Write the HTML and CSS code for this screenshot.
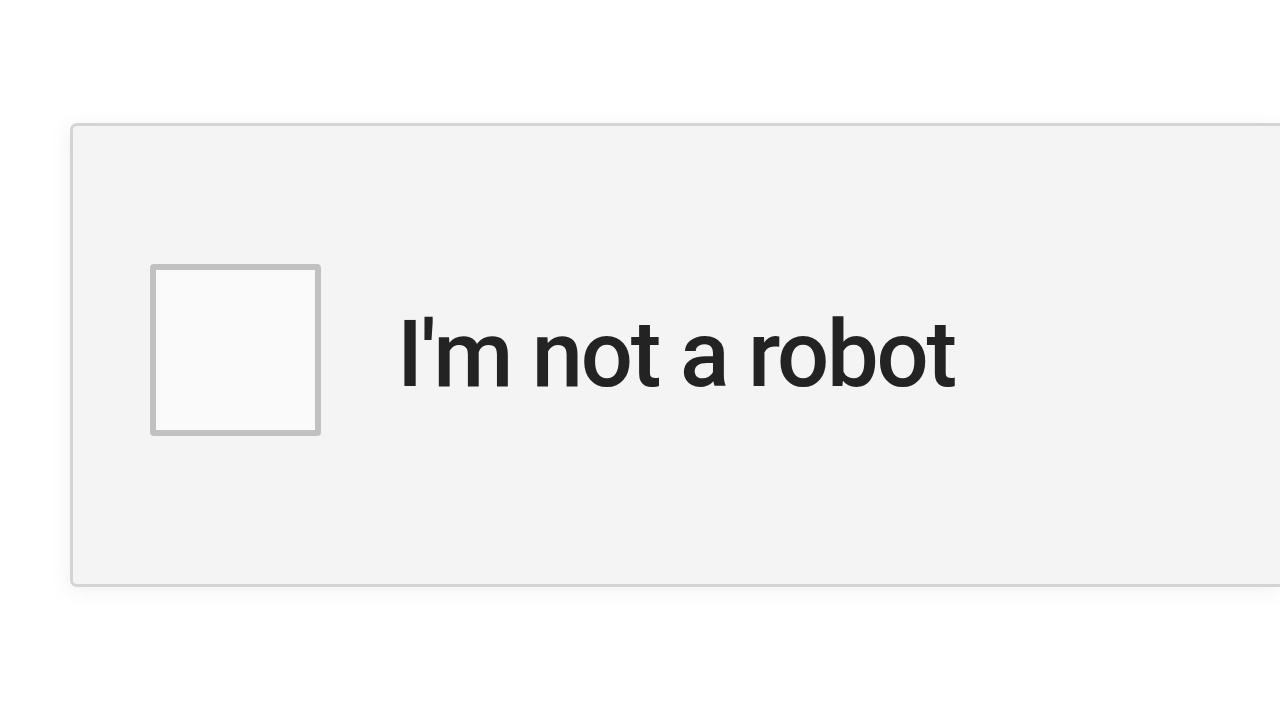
FILE: index.html
```html
<!DOCTYPE html>
<html lang="en">
<head>
    <meta charset="UTF-8">
    <meta name="viewport" content="width=device-width, initial-scale=1.0">
    <title>reCAPTCHA</title>
    <link rel="stylesheet" href="styles.css">
</head>
<body>
    <div class="captcha">
        <label class="captcha-row">
            <span class="checkbox"></span>
            <span class="captcha-label">I'm not a robot</span>
        </label>
    </div>
</body>
</html>
```

FILE: styles.css
```css
html, body {
    margin: 0;
    height: 100%;
    overflow: hidden;
    background-color: #ffffff;
}

body {
    font-family: Roboto, Arial, sans-serif;
    padding: 123px 0 0 70px;
    box-sizing: border-box;
}

/* the widget is cut off by the right edge of the frame */
.captcha {
    width: 1210px;
    height: 464px;
    box-sizing: border-box;
    background-color: #f4f4f4;
    border: 3px solid #d4d4d4;
    border-right: none;
    border-radius: 7px 0 0 7px;
    box-shadow: -2px 4px 22px rgba(0, 0, 0, 0.06);
    display: flex;
    align-items: center;
}

.captcha-row {
    display: flex;
    align-items: center;
    margin-top: -10px;
    padding-left: 77px;
    cursor: pointer;
}

.checkbox {
    width: 171px;
    height: 172px;
    box-sizing: border-box;
    border: 6px solid #c1c1c1;
    border-radius: 4px;
    background-color: #fafafa;
}

.captcha-label {
    margin-left: 76px;
    margin-top: 8px;
    font-size: 92px;
    font-weight: 500;
    color: #232323;
    letter-spacing: -2.2px;
}
```
